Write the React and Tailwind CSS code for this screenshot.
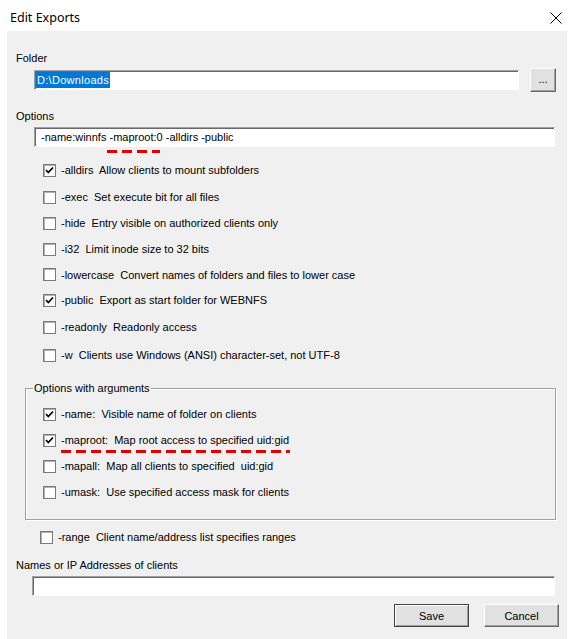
import React from 'react';

const mainOptions = [
  { flag: "-alldirs", text: "Allow clients to mount subfolders", checked: true, h: "h-[28px]" },
  { flag: "-exec", text: "Set execute bit for all files", checked: false, h: "h-[26px]" },
  { flag: "-hide", text: "Entry visible on authorized clients only", checked: false, h: "h-[26px]" },
  { flag: "-i32", text: "Limit inode size to 32 bits", checked: false, h: "h-[26px]" },
  { flag: "-lowercase", text: "Convert names of folders and files to lower case", checked: false, h: "h-[25px]" },
  { flag: "-public", text: "Export as start folder for WEBNFS", checked: true, h: "h-[26px]" },
  { flag: "-readonly", text: "Readonly access", checked: false, h: "h-[28px]" },
  { flag: "-w", text: "Clients use Windows (ANSI) character-set, not UTF-8", checked: false, h: "h-[28px]" },
];

const argOptions = [
  { flag: "-name:", text: "Visible name of folder on clients", checked: true },
  { flag: "-maproot:", text: "Map root access to specified uid:gid", checked: true, mark: true },
  { flag: "-mapall:", text: "Map all clients to specified  uid:gid", checked: false },
  { flag: "-umask:", text: "Use specified access mask for clients", checked: false },
];

function CheckBox({ checked }) {
  return (
    <span className="w-[13px] h-[13px] shrink-0 bg-white border border-[#7a7a7a] shadow-[inset_1px_1px_0_#b0b0b0] flex items-center justify-center">
      {checked && (
        <svg width="9" height="9" viewBox="0 0 9 9">
          <path d="M1 4 L3.3 6.5 L8 1.5" fill="none" stroke="#000" strokeWidth="1.8" />
        </svg>
      )}
    </span>
  );
}

function RedDash({ width, className }) {
  return (
    <svg width={width} height="5" className={`absolute ${className}`}>
      <line x1="0" y1="2.5" x2={width} y2="2.5" stroke="#e00000" strokeWidth="3" strokeDasharray="10 5" />
    </svg>
  );
}

function OptionRow({ flag, text, checked, mark, h = "h-[26px]", indent = "pl-[36px]" }) {
  return (
    <div className={`${h} ${indent} flex items-center gap-[5px]`}>
      <CheckBox checked={checked} />
      <span className="relative whitespace-pre">
        {flag}  {text}
        {mark && <RedDash width={229} className="left-0 top-[16px]" />}
      </span>
    </div>
  );
}

function Sunken({ children, className }) {
  return (
    <div className={`bg-white border border-t-[#a0a0a0] border-l-[#a0a0a0] border-b-white border-r-white shadow-[inset_1px_1px_0_#696969] ${className}`}>
      {children}
    </div>
  );
}

function WinButton({ children, isDefault }) {
  return (
    <button
      className={`w-[75px] h-[23px] bg-[#e1e1e1] text-[11px] border ${
        isDefault
          ? "border-[#404040] shadow-[inset_1px_1px_0_#fff,inset_-1px_-1px_0_#a0a0a0]"
          : "border-t-white border-l-white border-b-[#696969] border-r-[#696969] shadow-[inset_-1px_-1px_0_#a0a0a0]"
      }`}
    >
      {children}
    </button>
  );
}

export default function App() {
  return (
    <div className="w-[574px] h-[639px] bg-white text-black text-[11px] leading-[14px] font-['Liberation_Sans',sans-serif] flex flex-col overflow-hidden">
      {/* title bar */}
      <div className="h-[31px] shrink-0 flex items-center justify-between pl-[10px] pr-[12px] pt-[4px]">
        <span className="text-[12.5px] font-['Noto_Sans','Liberation_Sans',sans-serif]">Edit Exports</span>
        <svg width="12" height="12" viewBox="0 0 12 12">
          <path d="M0.5 0.5 L11.5 11.5 M11.5 0.5 L0.5 11.5" stroke="#000" strokeWidth="1" />
        </svg>
      </div>

      <div className="mx-[7px] flex-1 bg-[#f0f0f0] flex flex-col">
        <div className="pl-[9px] pt-[20px]">Folder</div>
        <div className="flex items-center pl-[27px] pr-[7px] mt-[3px] h-[24px]">
          <Sunken className="w-[485px] h-[20px] flex items-center pl-[1px]">
            <span className="bg-[#0078d7] text-white px-[1px] leading-[16px] tracking-[0.3px]">D:\Downloads</span>
          </Sunken>
          <div className="ml-[11px] w-[26px] h-[24px] bg-[#e1e1e1] border border-t-white border-l-white border-b-[#696969] border-r-[#696969] shadow-[inset_-1px_-1px_0_#a0a0a0] flex items-center justify-center pb-[2px]">
            ...
          </div>
        </div>

        <div className="pl-[9px] mt-[17px]">Options</div>
        <div className="pl-[27px] mt-[4px]">
          <Sunken className="w-[521px] h-[20px] flex items-center pl-[6px]">
            <span className="whitespace-pre">
              -name:winnfs{" "}
              <span className="relative">
                -maproot:0
                <RedDash width={53} className="left-[-2px] top-[18px]" />
              </span>{" "}
              -alldirs -public
            </span>
          </Sunken>
        </div>

        <div className="mt-[9px]">
          {mainOptions.map((o) => (
            <OptionRow key={o.flag} {...o} />
          ))}
        </div>

        {/* group box */}
        <div className="relative mt-[19px] ml-[18px] w-[531px] h-[132px] border border-[#a0a0a0] shadow-[inset_1px_1px_0_#fff,1px_1px_0_#fff] pt-[12px]">
          <span className="absolute left-[7px] top-[-8px] bg-[#f0f0f0] px-[1px]">Options with arguments</span>
          {argOptions.map((o) => (
            <OptionRow key={o.flag} {...o} indent="pl-[17px]" />
          ))}
        </div>

        <div className="mt-[3px]">
          <OptionRow flag="-range" text="Client name/address list specifies ranges" checked={false} indent="pl-[33px]" h="h-[28px]" />
        </div>

        <div className="pl-[9px] mt-[7px]">Names or IP Addresses of clients</div>
        <div className="pl-[25px] mt-[4px]">
          <Sunken className="w-[523px] h-[20px]" />
        </div>

        <div className="flex justify-end gap-[15px] pr-[8px] mt-[8px]">
          <WinButton isDefault>Save</WinButton>
          <WinButton>Cancel</WinButton>
        </div>
      </div>
    </div>
  );
}
